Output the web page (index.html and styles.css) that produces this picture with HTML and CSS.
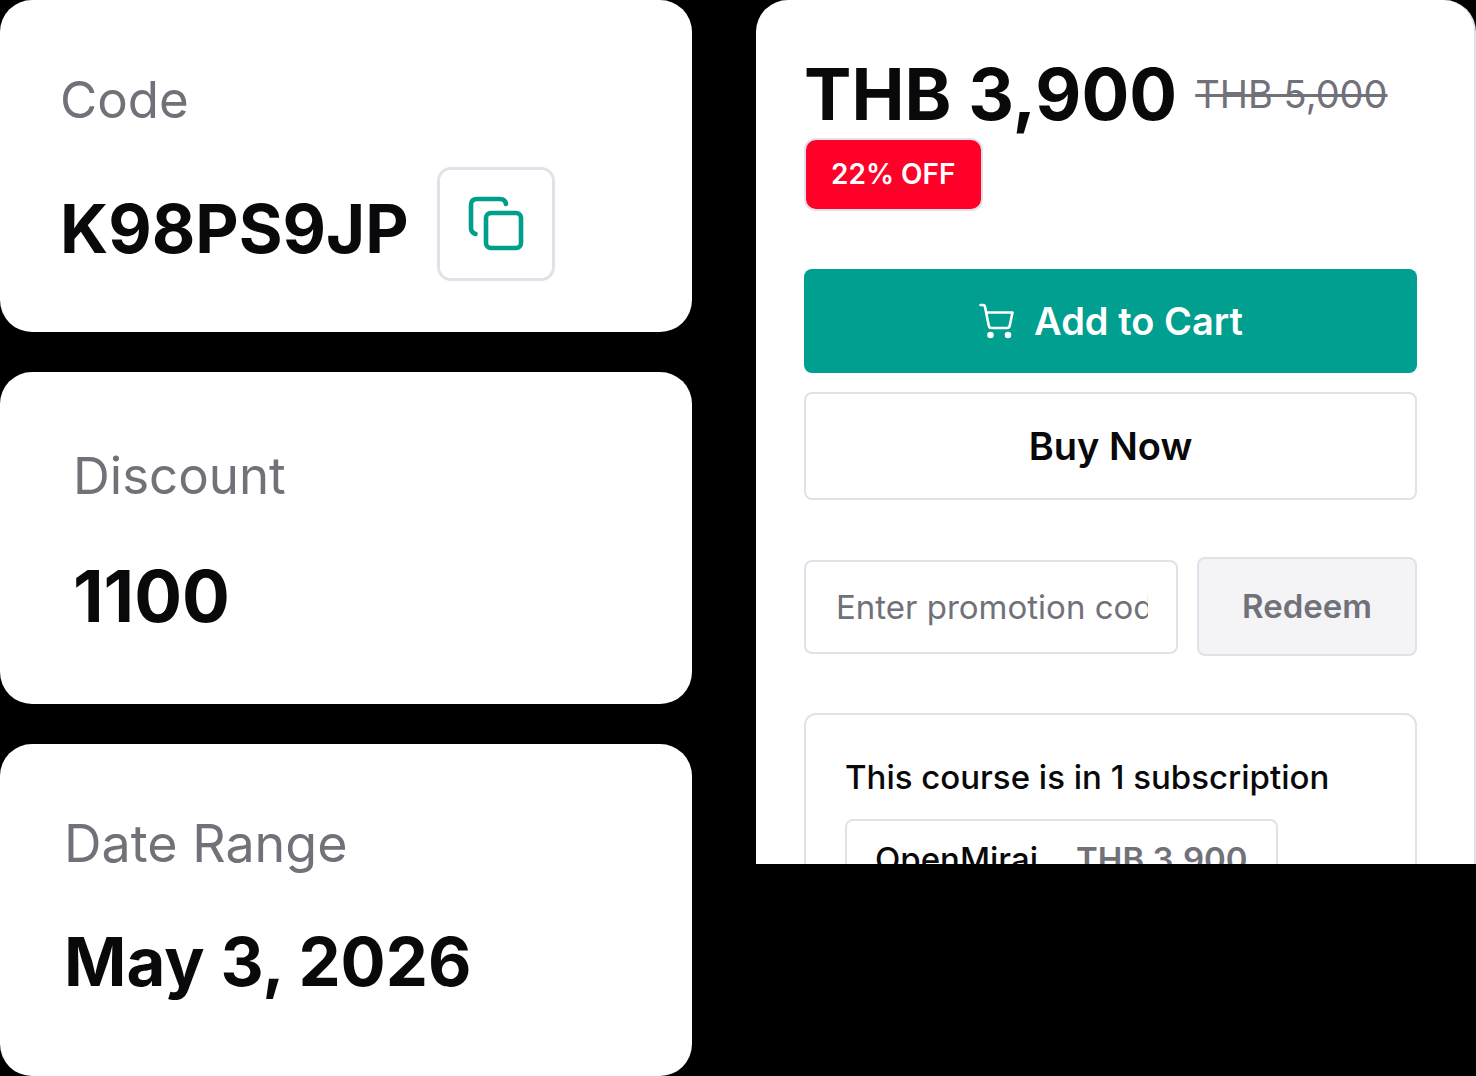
FILE: index.html
```html
<!DOCTYPE html>
<html lang="en">
<head>
<meta charset="utf-8">
<meta name="viewport" content="width=device-width, initial-scale=1">
<title>Course promotion</title>
<link rel="stylesheet" href="styles.css">
</head>
<body>
<main class="board">
  <div class="facts">
    <section class="fact fact-code">
      <h2 class="fact-label">Code</h2>
      <div class="code-row">
        <p class="fact-value">K98PS9JP</p>
        <button class="copy" type="button" aria-label="Copy code">
          <svg class="copy-icon" viewBox="0 0 60 60" fill="none" stroke="currentColor" stroke-width="4.600" stroke-linecap="round" stroke-linejoin="round" aria-hidden="true">
            <rect x="20" y="19" width="35" height="35" rx="5"/>
            <path d="M9.500 40c-3-1-4.500-3-4.500-6V11c0-4 2-6 6-6h23c3.500 0 5.500 2 6 5"/>
          </svg>
        </button>
      </div>
    </section>
    <section class="fact fact-discount">
      <h2 class="fact-label">Discount</h2>
      <p class="fact-value">1100</p>
    </section>
    <section class="fact fact-date">
      <h2 class="fact-label">Date Range</h2>
      <p class="fact-value">May 3, 2026</p>
    </section>
  </div>

  <section class="purchase">
    <div class="price-row">
      <strong class="price">THB 3,900</strong>
      <s class="old-price">THB 5,000</s>
    </div>
    <span class="badge">22% OFF</span>
    <div class="actions">
      <button class="btn btn-cart" type="button">
        <svg class="cart-icon" viewBox="0 0 36 36" fill="none" stroke="currentColor" stroke-width="2.600" stroke-linecap="round" stroke-linejoin="round" aria-hidden="true">
          <path d="M2.500 2h2.500c1.200 0 1.800.6 2 1.800l3.800 19c.3 1.500 1.200 2.200 2.700 2.200h15.500c1.500 0 2.400-.7 2.700-2.200L34.500 9.500H8.200"/>
          <circle cx="12.500" cy="32" r="2" fill="currentColor"/>
          <circle cx="30" cy="32" r="2" fill="currentColor"/>
        </svg>
        Add to Cart
      </button>
      <button class="btn btn-buy" type="button">Buy Now</button>
    </div>
    <form class="promo">
      <input class="promo-input" type="text" placeholder="Enter promotion code" aria-label="Promotion code">
      <button class="promo-btn" type="button">Redeem</button>
    </form>
    <div class="plans">
      <p class="plans-title">This course is in 1 subscription</p>
      <a class="plan" href="#">
        <span>OpenMirai</span>
        <span class="plan-price">THB 3,900</span>
      </a>
    </div>
  </section>
</main>
</body>
</html>
```
FILE: styles.css
```css
* {
  box-sizing: border-box;
}

body {
  margin: 0;
  background: #000;
  color: #09090b;
  font-family: Inter, "Liberation Sans", sans-serif;
}

h2,
p {
  margin: 0;
}

button,
input {
  font: inherit;
  margin: 0;
}

.board {
  display: grid;
  grid-template-columns: 692fr 720fr;
  gap: 64px;
  align-items: start;
}

.facts {
  display: grid;
  gap: 40px;
}

.fact {
  min-height: 332px;
  padding: 70px 60px 50px;
  border-radius: 32px;
  background: #fff;
}

.fact-discount {
  padding: 74px 73px 48px;
}

.fact-date {
  padding: 70px 64px 50px;
}

.fact-label {
  margin-bottom: 48px;
  color: #71717a;
  font-size: 51px;
  font-weight: 400;
  line-height: 60px;
}

.fact-value {
  font-size: 67px;
  font-weight: 700;
  line-height: 80px;
}

.fact-discount .fact-label {
  margin-bottom: 50px;
}

.fact-discount .fact-value {
  font-size: 71px;
}

.fact-date .fact-label {
  font-size: 52px;
}

.fact-code .fact-label {
  margin-bottom: 37px;
}

.code-row {
  display: flex;
  align-items: flex-end;
  gap: 28px;
}

.code-row .fact-value {
  line-height: 104px;
}

.copy {
  display: grid;
  place-items: center;
  width: 118px;
  height: 114px;
  padding: 0;
  border: 3px solid #e2e1e9;
  border-radius: 14px;
  background: #fff;
  color: #009f8b;
}

.copy-icon {
  width: 60px;
  height: 60px;
}

.purchase {
  max-height: 864px;
  padding: 50px 57px 0 48px;
  overflow: hidden;
  border-right: 2px solid #e2e1e9;
  border-radius: 32px 32px 0 0;
  background: #fff;
}

.price-row {
  display: flex;
  align-items: center;
  gap: 18px;
  line-height: 88px;
  white-space: nowrap;
}

.price {
  font-size: 71px;
  font-weight: 700;
}

.old-price {
  color: #71717a;
  font-size: 38px;
}

.badge {
  display: block;
  width: fit-content;
  padding: 0 25px;
  border: 2px solid #e2e1e9;
  border-radius: 12px;
  background: #ff0028;
  color: #fff;
  font-size: 28px;
  font-weight: 600;
  line-height: 69px;
}

.actions {
  display: grid;
  gap: 19px;
  margin-top: 58px;
}

.btn {
  display: flex;
  align-items: center;
  justify-content: center;
  gap: 20px;
  padding: 0;
  border: 0;
  border-radius: 8px;
  font-size: 38px;
  font-weight: 600;
  line-height: 104px;
}

.btn-cart {
  background: #009f8f;
  color: #fff;
}

.cart-icon {
  width: 36px;
  height: 36px;
}

.btn-buy {
  border: 2px solid #e2e1e9;
  background: #fff;
  color: #09090b;
}

.promo {
  display: flex;
  align-items: center;
  gap: 19px;
  margin-top: 57px;
}

.promo-input {
  flex: 1;
  min-width: 0;
  height: 94px;
  padding: 0 28px 0 30px;
  border: 2px solid #e2e1e9;
  border-radius: 8px;
  background: #fff;
  font-size: 33px;
}

.promo-input::placeholder {
  color: #71717a;
}

.promo-btn {
  padding: 0 43px;
  border: 2px solid #e2e1e9;
  border-radius: 8px;
  background: #f4f4f6;
  color: #71717a;
  font-size: 33px;
  font-weight: 600;
  line-height: 95px;
}

.plans {
  padding: 40px 39px;
  border: 2px solid #e2e1e9;
  border-radius: 12px;
  margin-top: 57px;
  font-size: 33px;
  font-weight: 500;
}

.plans-title {
  line-height: 44px;
}

.plan {
  display: flex;
  gap: 38px;
  width: fit-content;
  margin-top: 20px;
  padding: 0 28px;
  border: 2px solid #e2e1e9;
  border-radius: 8px;
  color: inherit;
  line-height: 76px;
  text-decoration: none;
  white-space: nowrap;
}

.plan-price {
  color: #71717a;
  font-weight: 600;
}
```
